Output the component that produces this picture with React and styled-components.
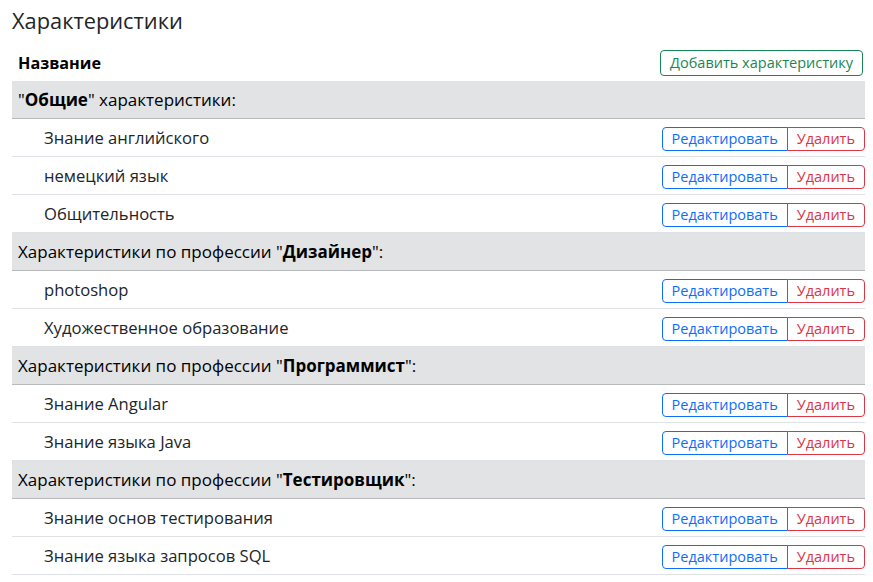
import React from "react";
import styled, { createGlobalStyle } from "styled-components";

const Global = createGlobalStyle`
  html, body { margin: 0; padding: 0; background: #fff; }
  body {
    font-family: "Open Sans", "Noto Sans", sans-serif;
    color: #212529;
    font-size: 16.6px;
  }
`;

const Page = styled.div`
  padding: 4px 8px 0 12px;
`;

const Title = styled.h4`
  margin: 0 0 7px 0;
  font-size: 21.8px;
  font-weight: 400;
  line-height: 34px;
  color: #212529;
`;

const Table = styled.div`
  display: flex;
  flex-direction: column;
`;

const HeadRow = styled.div`
  display: flex;
  align-items: center;
  justify-content: space-between;
  height: 36px;
  padding: 0 0 0 6px;
`;

const HeadCell = styled.div`
  font-weight: 700;
  font-size: 16.2px;
  color: #000;
`;

const GroupRow = styled.div`
  display: flex;
  align-items: center;
  height: 37px;
  padding: 0 6px;
  background: #e2e3e5;
  border-bottom: 1px solid #b7b9bc;
  color: #000;
  font-size: 17px;
`;

const Strong = styled.b`
  font-weight: 700;
`;

const Row = styled.div`
  display: flex;
  align-items: center;
  justify-content: space-between;
  height: 37px;
  padding: 0 0 0 32px;
  border-bottom: 1px solid #dee2e6;
`;

const Actions = styled.div`
  display: flex;
  margin-top: 2px;
`;

const Btn = styled.button`
  font-family: inherit;
  font-size: 14.5px;
  line-height: 20px;
  height: 24px;
  padding: 0 9px;
  background: #fff;
  border: 1px solid ${(p) => p.$color};
  color: ${(p) => p.$color};
  cursor: pointer;
  border-radius: ${(p) =>
    p.$pos === "left" ? "4px 0 0 4px" : p.$pos === "right" ? "0 4px 4px 0" : "4px"};
  ${(p) => (p.$pos === "right" ? "margin-left: -1px;" : "")}
`;

const AddBtn = styled(Btn)`
  height: 26px;
  padding: 0 9px;
  font-size: 14.5px;
  margin-right: 2px;
`;

const groups = [
  {
    title: (
      <>
        "<Strong>Общие</Strong>" характеристики:
      </>
    ),
    items: ["Знание английского", "немецкий язык", "Общительность"],
  },
  {
    title: (
      <>
        Характеристики по профессии "<Strong>Дизайнер</Strong>":
      </>
    ),
    items: ["photoshop", "Художественное образование"],
  },
  {
    title: (
      <>
        Характеристики по профессии "<Strong>Программист</Strong>":
      </>
    ),
    items: ["Знание Angular", "Знание языка Java"],
  },
  {
    title: (
      <>
        Характеристики по профессии "<Strong>Тестировщик</Strong>":
      </>
    ),
    items: ["Знание основ тестирования", "Знание языка запросов SQL"],
  },
];

export default function App() {
  return (
    <>
      <Global />
      <Page>
        <Title>Характеристики</Title>
        <Table>
          <HeadRow>
            <HeadCell>Название</HeadCell>
            <AddBtn $color="#198754">Добавить характеристику</AddBtn>
          </HeadRow>
          {groups.map((g, i) => (
            <React.Fragment key={i}>
              <GroupRow>
                <span>{g.title}</span>
              </GroupRow>
              {g.items.map((it) => (
                <Row key={it}>
                  <span>{it}</span>
                  <Actions>
                    <Btn $color="#0d6efd" $pos="left">Редактировать</Btn>
                    <Btn $color="#dc3545" $pos="right">Удалить</Btn>
                  </Actions>
                </Row>
              ))}
            </React.Fragment>
          ))}
        </Table>
      </Page>
    </>
  );
}
